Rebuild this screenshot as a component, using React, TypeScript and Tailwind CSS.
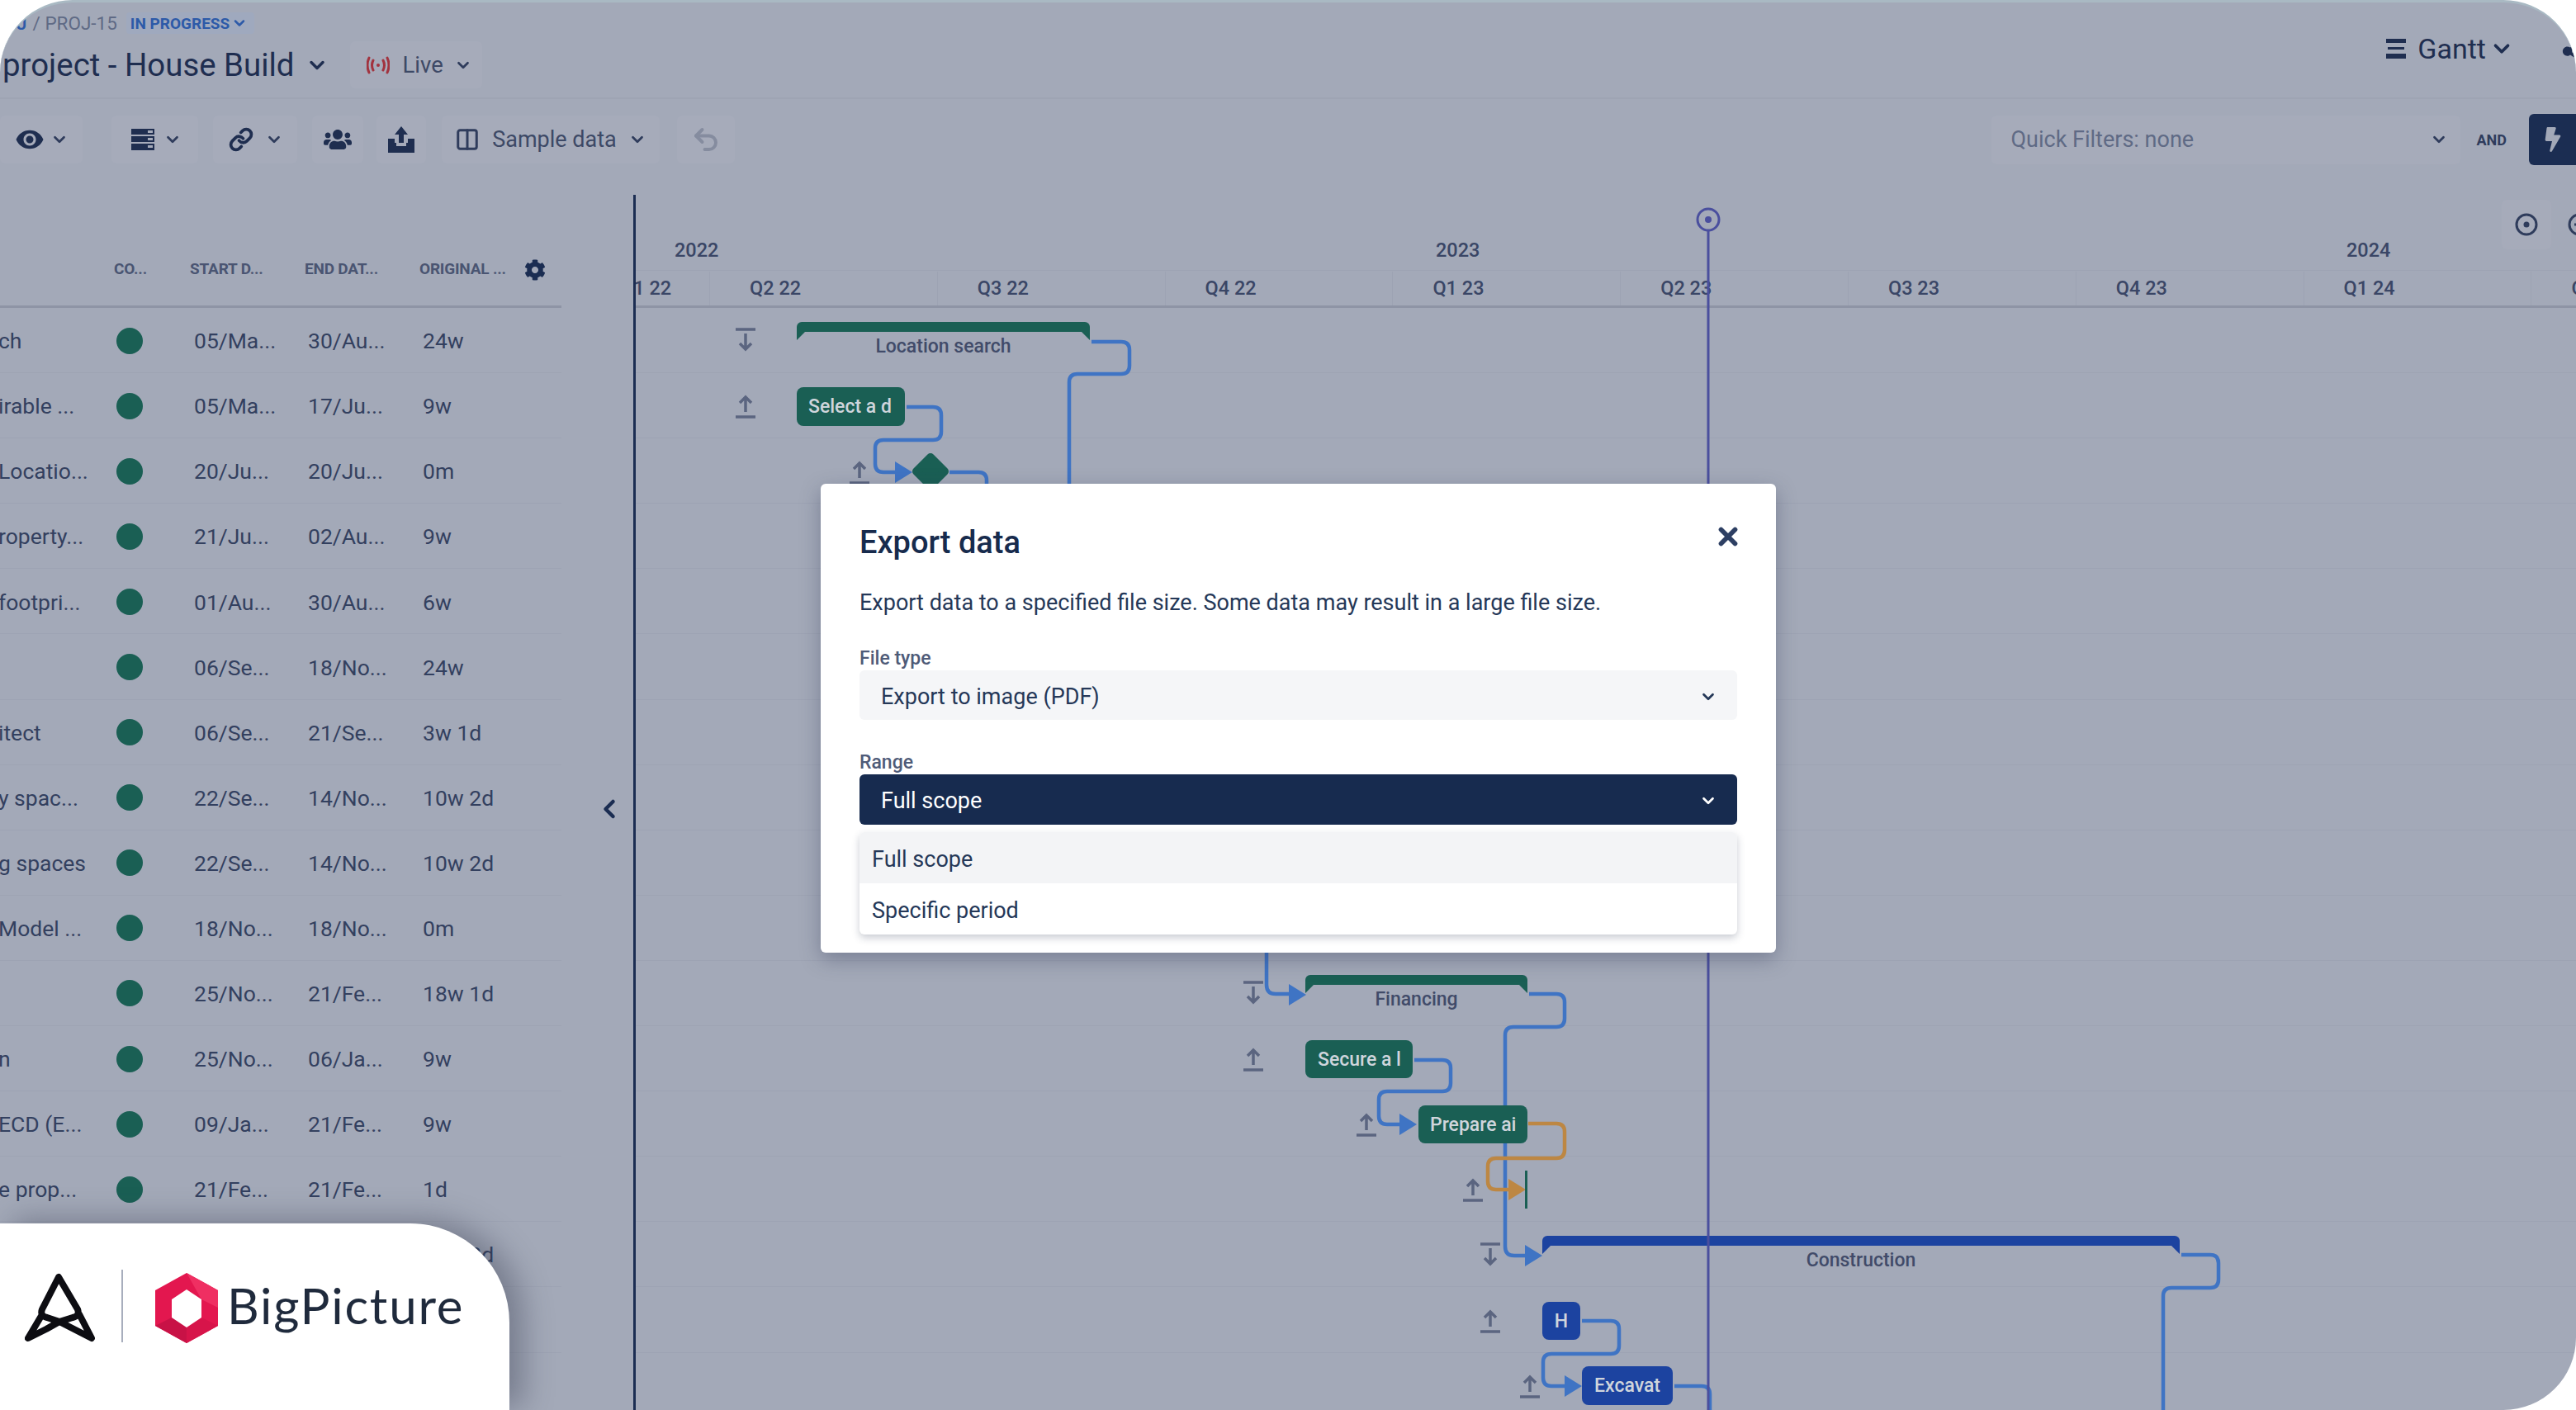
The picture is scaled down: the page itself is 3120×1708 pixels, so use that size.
import React from "react";
import { ChevronDown, ChevronLeft, Columns2, Link as LinkIcon, Undo2, X } from "lucide-react";
import { FaBolt, FaCog, FaShareAlt, FaUsers } from "react-icons/fa";
import { MdVisibility } from "react-icons/md";

const rows = [
  ["ch", "05/Ma...", "30/Au...", "24w"],
  ["irable ...", "05/Ma...", "17/Ju...", "9w"],
  ["Locatio...", "20/Ju...", "20/Ju...", "0m"],
  ["roperty...", "21/Ju...", "02/Au...", "9w"],
  ["footpri...", "01/Au...", "30/Au...", "6w"],
  ["", "06/Se...", "18/No...", "24w"],
  ["itect", "06/Se...", "21/Se...", "3w 1d"],
  ["y spac...", "22/Se...", "14/No...", "10w 2d"],
  ["g spaces", "22/Se...", "14/No...", "10w 2d"],
  ["Model ...", "18/No...", "18/No...", "0m"],
  ["", "25/No...", "21/Fe...", "18w 1d"],
  ["n", "25/No...", "06/Ja...", "9w"],
  ["ECD (E...", "09/Ja...", "21/Fe...", "9w"],
  ["e prop...", "21/Fe...", "21/Fe...", "1d"],
  ["", "", "", "10w 2d"],
  ["", "", "", ""],
];

const quarters = ["Q2 22", "Q3 22", "Q4 22", "Q1 23", "Q2 23", "Q3 23", "Q4 23", "Q1 24", "Q2 24"];

function Chev({ className }: { className: string }) {
  return <ChevronDown className={className} strokeWidth={3} />;
}

function Up({ x, y }: { x: number; y: number }) {
  return (
    <g stroke="#5b6580" strokeWidth={3.5} fill="none">
      <path d={`M${x} ${y + 7}V${y - 11}M${x - 7} ${y - 4}L${x} ${y - 11}L${x + 7} ${y - 4}`} />
      <path d={`M${x - 12} ${y + 13}H${x + 12}`} />
    </g>
  );
}

function Collapse({ x, y }: { x: number; y: number }) {
  return (
    <g stroke="#5b6580" strokeWidth={3.5} fill="none">
      <path d={`M${x} ${y - 8}V${y + 11}M${x - 7} ${y + 4}L${x} ${y + 11}L${x + 7} ${y + 4}`} />
      <path d={`M${x - 12} ${y - 13}H${x + 12}`} />
    </g>
  );
}

function Arrow({ x, y, color }: { x: number; y: number; color: string }) {
  return <path d={`M${x - 21} ${y - 13}L${x} ${y}L${x - 21} ${y + 13}Z`} fill={color} />;
}

function TopIconBox({ className, children }: { className: string; children: React.ReactNode }) {
  return <div className={`flex h-[58px] items-center justify-center rounded-md bg-[#a6abba] ${className}`}>{children}</div>;
}

function Bracket({ className, color, label }: { className: string; color: string; label: string }) {
  return (
    <div className={`absolute ${className}`}>
      <div className={`h-[22px] rounded-t-[6px] [clip-path:polygon(0_0,100%_0,100%_100%,calc(100%_-_10px)_12px,10px_12px,0_100%)] ${color}`} />
      <div className="-mt-[4px] text-center text-[23px] font-medium leading-[24px] text-[#414b69]">{label}</div>
    </div>
  );
}

function Task({ className, color, label }: { className: string; color: string; label: string }) {
  return (
    <div className={`absolute flex items-center overflow-hidden whitespace-nowrap rounded-lg text-[23px] font-medium leading-none text-[#cfd5dc] ${color} ${className}`}>
      {label}
    </div>
  );
}

function Logo() {
  return (
    <div className="absolute bottom-0 left-0 z-20 flex h-[226px] w-[617px] items-start rounded-tr-[120px] bg-white pl-[30px] pt-[56px] shadow-[16px_-4px_36px_rgba(50,55,75,0.4)]">
      <svg width="85" height="84" viewBox="0 0 85 84" className="mt-[4px] shrink-0">
        <path
          d="M41 5L21 44Q18 52 27 54L42 59L58 54Q67 52 64 44ZM20 52L4 79L26 68L42 59L81 79L66 50"
          fill="none"
          stroke="#0d0d12"
          strokeWidth="8"
          strokeLinejoin="round"
          strokeLinecap="round"
        />
      </svg>
      <div className="ml-[32px] h-[88px] w-[2px] shrink-0 bg-[#a8aebd]" />
      <svg width="76" height="85" viewBox="0 0 76 85" className="ml-[39px] mt-[4px] shrink-0">
        <polygon points="38,0 76,21 76,64 38,85 0,64 0,21" fill="#e3174f" />
        <polygon points="38,0 76,21 76,42 56,32" fill="#ef2f62" />
        <polygon points="0,64 38,85 38,66 20,54" fill="#c81246" />
        <polygon points="76,64 38,85 38,66 56,54" fill="#d7144a" />
        <polygon points="38,20 56,32 56,54 38,66 20,54 20,32" fill="#ffffff" />
      </svg>
      <span className="ml-[11px] mt-[8px] font-['Lato',sans-serif] text-[60px] leading-[70px] tracking-[1.8px] text-[#1f2a3c]">BigPicture</span>
    </div>
  );
}

function Modal() {
  return (
    <div className="absolute left-[994px] top-[586px] z-10 h-[568px] w-[1157px] rounded-md bg-white px-[47px] pt-[48px] shadow-[0_8px_24px_rgba(40,50,80,0.35)]">
      <X className="absolute right-[41px] top-[47px] h-[34px] w-[34px] text-[#2d3f63]" strokeWidth={4} />
      <h2 className="text-[38px] font-medium leading-[46px] text-[#172b4d]">Export data</h2>
      <p className="mt-[33px] text-[27px] leading-[34px] text-[#253858]">Export data to a specified file size. Some data may result in a large file size.</p>
      <div className="mt-[39px] text-[23px] font-medium leading-[24px] text-[#4f5b78]">File type</div>
      <div className="mt-[2px] flex h-[60px] items-center justify-between rounded-md bg-[#f5f6f8] pl-[26px] pr-[24px] pt-[4px] text-[27px] text-[#253858]">
        <span>Export to image (PDF)</span>
        <Chev className="h-[22px] w-[22px] text-[#253858]" />
      </div>
      <div className="mt-[40px] text-[23px] font-medium leading-[24px] text-[#4f5b78]">Range</div>
      <div className="mt-[2px] flex h-[61px] items-center justify-between rounded-md bg-[#172b4f] pl-[26px] pr-[24px] pt-[3px] text-[27px] text-white">
        <span>Full scope</span>
        <Chev className="h-[22px] w-[22px] text-white" />
      </div>
      <div className="mt-[9px] overflow-hidden rounded-md bg-white text-[27px] text-[#253858] shadow-[0_4px_10px_rgba(40,50,80,0.25)]">
        <div className="flex h-[62px] items-center bg-[#f3f4f6] pl-[15px] pt-[4px]">Full scope</div>
        <div className="flex h-[62px] items-center pl-[15px] pt-[4px]">Specific period</div>
      </div>
    </div>
  );
}

export default function App() {
  return (
    <div className="relative h-[1708px] w-[3120px] overflow-hidden bg-white font-['Roboto',sans-serif] text-[#33405f]">
      <div className="flex h-full flex-col overflow-hidden rounded-[88px] border-t-[3px] border-[#a9b9c3] bg-[#a3a9b8]">
        {/* header */}
        <header className="-mt-[3px] flex h-[120px] shrink-0 justify-between border-b-2 border-[#9ea4b3]">
          <div>
            <div className="flex h-[56px] items-center pl-[20px] text-[22.5px] leading-none">
              <span className="font-medium text-[#2d5aa8]">J</span>
              <span className="ml-[7px] text-[#5f6a85]">/ PROJ-15</span>
              <span className="ml-[11px] flex h-[26px] w-[155px] items-center gap-[2px] rounded-sm bg-[#9fa9be] pl-[5px] text-[19px] font-bold text-[#2d5aa8]">
                IN PROGRESS
                <Chev className="h-[20px] w-[20px]" />
              </span>
            </div>
            <div className="-mt-[6px] flex items-center pl-[3px]">
              <span className="text-[38.4px] leading-[48px] text-[#1f2e50]">project - House Build</span>
              <Chev className="ml-[14px] h-[28px] w-[28px] text-[#1f2e50]" />
              <div className="ml-[26px] flex h-[57px] w-[160px] items-center rounded-md bg-[#a6abba] pl-[20px] text-[27.5px] text-[#3d4966]">
                <svg width="28" height="24" viewBox="0 0 28 24" fill="none" stroke="#a2333f" strokeWidth="3" strokeLinecap="round">
                  <circle cx="14" cy="12" r="2" fill="#a2333f" stroke="none" />
                  <path d="M8 6Q5 12 8 18M20 6Q23 12 20 18M3 3Q-1 12 3 21M25 3Q29 12 25 21" />
                </svg>
                <span className="ml-[15px]">Live</span>
                <Chev className="ml-[13px] h-[22px] w-[22px] text-[#2f3c5c]" />
              </div>
            </div>
          </div>
          <div className="-mr-[12px] flex items-start pt-[44px] text-[#1f2e50]">
            <svg width="26" height="28" viewBox="0 0 26 28" className="mt-[1px]" fill="#1f2e50">
              <rect x="1" y="2" width="24" height="5" />
              <rect x="3" y="12" width="20" height="3" />
              <rect x="1" y="20" width="24" height="6" />
            </svg>
            <span className="ml-[13px] text-[34px] leading-[30px]">Gantt</span>
            <Chev className="ml-[4px] h-[30px] w-[30px]" />
            <FaShareAlt className="ml-[57px] mt-[3px] h-[30px] w-[30px] shrink-0" />
          </div>
        </header>

        {/* toolbar */}
        <div className="flex h-[116px] shrink-0 items-center pb-[18px]">
          <TopIconBox className="w-[100px] gap-[7px]">
            <MdVisibility className="h-[36px] w-[36px] text-[#1f2e50]" />
            <Chev className="h-[22px] w-[22px] text-[#2f3c5c]" />
          </TopIconBox>
          <TopIconBox className="ml-[35px] w-[105px] gap-[11px] pl-[4px]">
            <svg width="28" height="26" viewBox="0 0 28 26" fill="#1f2e50">
              <rect width="28" height="7" />
              <rect y="9" width="28" height="7" />
              <rect y="18" width="28" height="8" />
              <rect x="20" y="2" width="6" height="3" fill="#a6abba" />
              <rect x="20" y="11" width="6" height="3" fill="#a6abba" />
              <rect x="20" y="20" width="6" height="3" fill="#a6abba" />
            </svg>
            <Chev className="h-[22px] w-[22px] text-[#2f3c5c]" />
          </TopIconBox>
          <TopIconBox className="ml-[18px] w-[102px] gap-[14px] pl-[2px]">
            <LinkIcon className="h-[30px] w-[30px] text-[#1f2e50]" strokeWidth={3} />
            <Chev className="h-[22px] w-[22px] text-[#2f3c5c]" />
          </TopIconBox>
          <TopIconBox className="ml-[18px] w-[62px]">
            <FaUsers className="h-[34px] w-[34px] text-[#1f2e50]" />
          </TopIconBox>
          <TopIconBox className="ml-[16px] w-[60px]">
            <svg width="32" height="32" viewBox="0 0 32 32" fill="#1f2e50">
              <path d="M16 0L24 10H19V20H13V10H8Z" />
              <path d="M0 15H8V20H10V24H22V20H24V15H32V32H0Z" />
            </svg>
          </TopIconBox>
          <TopIconBox className="ml-[19px] w-[264px] text-[27px] text-[#3d4966]">
            <Columns2 className="h-[30px] w-[30px] text-[#2f3c5c]" strokeWidth={2.4} />
            <span className="ml-[15px]">Sample data</span>
            <Chev className="ml-[14px] h-[22px] w-[22px] text-[#2f3c5c]" />
          </TopIconBox>
          <TopIconBox className="ml-[21px] w-[70px]">
            <Undo2 className="h-[36px] w-[36px] text-[#858c9f]" strokeWidth={2.6} />
          </TopIconBox>
          <div className="ml-auto flex items-center">
            <div className="flex h-[59px] w-[568px] items-center justify-between rounded-md bg-[#a6abba] pl-[24px] pr-[15px] text-[27px] text-[#5f6a85]">
              <span>Quick Filters: none</span>
              <Chev className="h-[22px] w-[22px] text-[#2f3c5c]" />
            </div>
            <span className="ml-[20px] text-[18px] font-bold text-[#2f3c5c]">AND</span>
            <div className="ml-[27px] flex h-[62px] w-[57px] items-center justify-start rounded-l-md bg-[#1b2d52] pl-[17px]">
              <FaBolt className="h-[30px] w-[24px] text-[#a3a9b8]" />
            </div>
          </div>
        </div>

        {/* body */}
        <div className="relative flex min-h-0 flex-1">
          {/* table */}
          <div className="relative w-[770px] shrink-0 border-r-[3px] border-[#1b2d52]">
            <div className="w-[680px]">
              <div className="grid h-[137px] grid-cols-[138px_92px_139px_139px_127px_1fr] items-end border-b-[3px] border-[#8e94a5] pb-[33px] text-[19px] font-bold leading-[22px] tracking-[-0.2px] text-[#4a5572]">
                <span />
                <span className="-ml-[138px] pl-[138px]">CO...</span>
                <span>START D...</span>
                <span>END DAT...</span>
                <span>ORIGINAL ...</span>
                <FaCog className="mb-[-3px] h-[26px] w-[26px] text-[#1b2d52]" />
              </div>
              {rows.map((r, i) => (
                <div key={i} className="grid h-[79.1px] grid-cols-[141px_94px_138px_139px_1fr] items-center border-b border-[#9da3b3] pt-[2px] text-[26.5px] text-[#33405f]">
                  <span className="-ml-[2px] overflow-hidden whitespace-nowrap">{r[0]}</span>
                  <span>{i < 14 && <span className="-mt-[1px] block h-[32px] w-[32px] rounded-full bg-[#1a5f54]" />}</span>
                  <span className="whitespace-nowrap">{r[1]}</span>
                  <span className="whitespace-nowrap">{r[2]}</span>
                  <span className="whitespace-nowrap">{r[3]}</span>
                </div>
              ))}
            </div>
            <ChevronLeft className="absolute left-[720px] top-[726px] h-[36px] w-[36px] text-[#1b2d52]" strokeWidth={3} />
          </div>

          {/* timeline */}
          <div className="relative flex min-w-0 flex-1 flex-col">
            <div className="h-[137px] shrink-0 border-b-[3px] border-[#8e94a5] text-[23.5px] font-medium leading-none text-[#3a4666]">
              <div className="flex h-[92px] items-end border-b border-[#9da3b3] pb-[12px]">
                <span className="ml-[47px] w-[922px]">2022</span>
                <span className="w-[1103px]">2023</span>
                <span>2024</span>
              </div>
              <div className="flex h-[42px] overflow-hidden pt-[1px]">
                <div className="flex w-[90px] shrink-0 items-center overflow-hidden border-r border-[#9da3b3]">
                  <span className="-ml-[19px] whitespace-nowrap">Q1 22</span>
                </div>
                {quarters.map((q) => (
                  <div key={q} className="flex w-[275.8px] shrink-0 items-center border-r border-[#9da3b3] pl-[48px]">
                    {q}
                  </div>
                ))}
              </div>
            </div>

            <div className="relative min-h-0 flex-1 overflow-hidden">
              {rows.concat(rows).slice(0, 17).map((_, i) => (
                <div key={i} className="h-[79.1px] border-b border-[#9da3b3]" />
              ))}
              <svg className="absolute inset-0 h-full w-full" viewBox="770 373 2350 1335" fill="none">
                <g stroke="#3f74c4" strokeWidth={4.5} strokeLinejoin="round">
                  <path d="M1322 414H1358Q1368 414 1368 424V443Q1368 453 1358 453H1305Q1295 453 1295 463V600" />
                  <path d="M1098 493H1130Q1140 493 1140 503V523Q1140 533 1130 533H1070Q1060 533 1060 543V562Q1060 572 1070 572H1090" />
                  <path d="M1150 572H1185Q1195 572 1195 582V600" />
                  <path d="M1534 1130V1193Q1534 1204 1545 1204H1565" />
                  <path d="M1852 1204H1885Q1895 1204 1895 1214V1234Q1895 1244 1885 1244H1833Q1823 1244 1823 1254V1510Q1823 1521 1834 1521H1850" />
                  <path d="M1713 1284H1747Q1757 1284 1757 1294V1312Q1757 1322 1747 1322H1680Q1670 1322 1670 1332V1352Q1670 1362 1680 1362H1700" />
                  <path d="M2642 1520H2677Q2687 1520 2687 1530V1550Q2687 1560 2677 1560H2630Q2620 1560 2620 1570V1720" />
                  <path d="M1916 1600H1951Q1961 1600 1961 1610V1630Q1961 1640 1951 1640H1879Q1869 1640 1869 1650V1669Q1869 1679 1879 1679H1900" />
                  <path d="M2028 1679H2061Q2071 1679 2071 1689V1720" />
                </g>
                <path d="M1851 1361H1885Q1895 1361 1895 1371V1393Q1895 1403 1885 1403H1812Q1802 1403 1802 1413V1431Q1802 1441 1812 1441H1830" stroke="#bd8743" strokeWidth={4.5} />
                <Arrow x={1105} y={572} color="#3f74c4" />
                <Arrow x={1582} y={1205} color="#3f74c4" />
                <Arrow x={1716} y={1362} color="#3f74c4" />
                <Arrow x={1848} y={1441} color="#bd8743" />
                <Arrow x={1868} y={1521} color="#3f74c4" />
                <Arrow x={1916} y={1679} color="#3f74c4" />
                <path d="M1127 554L1144 571L1127 588L1110 571Z" fill="#1a5f54" stroke="#1a5f54" strokeWidth={10} strokeLinejoin="round" />
                <rect x="1847" y="1418" width="3" height="46" fill="#1a5f54" />
                <Collapse x={903} y={412} />
                <Up x={903} y={492} />
                <Up x={1041} y={572} />
                <Collapse x={1518} y={1203} />
                <Up x={1518} y={1283} />
                <Up x={1655} y={1362} />
                <Up x={1784} y={1441} />
                <Collapse x={1805} y={1520} />
                <Up x={1805} y={1600} />
                <Up x={1853} y={1679} />
              </svg>
              <Bracket className="left-[195px] top-[17px] w-[355px]" color="bg-[#1a5f54]" label="Location search" />
              <Bracket className="left-[811px] top-[808px] w-[269px]" color="bg-[#1a5f54]" label="Financing" />
              <Bracket className="left-[1098px] top-[1124px] w-[772px]" color="bg-[#1c43a0]" label="Construction" />
              <Task className="left-[195px] top-[96px] h-[47px] w-[131px] pl-[14px]" color="bg-[#1a5f54]" label="Select a d" />
              <Task className="left-[811px] top-[887px] h-[46px] w-[130px] pl-[15px]" color="bg-[#1a5f54]" label="Secure a l" />
              <Task className="left-[948px] top-[966px] h-[46px] w-[132px] pl-[14px]" color="bg-[#1a5f54]" label="Prepare ai" />
              <Task className="left-[1098px] top-[1204px] h-[46px] w-[46px] justify-center" color="bg-[#1c43a0]" label="H" />
              <Task className="left-[1146px] top-[1282px] h-[47px] w-[110px] justify-center" color="bg-[#1c43a0]" label="Excavat" />
            </div>

            <svg className="pointer-events-none absolute inset-0 h-full w-full" viewBox="770 236 2350 1472" fill="none">
              <circle cx="2069" cy="266" r="13" stroke="#4a4f9e" strokeWidth="3" />
              <circle cx="2069" cy="266" r="4" fill="#4a4f9e" />
              <rect x="2067.5" y="279" width="3" height="1429" fill="#4a4f9e" />
            </svg>

            <div className="absolute left-[2260px] top-[6px] flex h-[60px] w-[60px] items-center justify-center rounded-md bg-[#a6abba]">
              <svg width="28" height="28" viewBox="0 0 28 28" fill="none" stroke="#2f3c5c" strokeWidth="3">
                <circle cx="14" cy="14" r="12" />
                <circle cx="14" cy="14" r="3.5" fill="#2f3c5c" stroke="none" />
              </svg>
            </div>
            <svg width="28" height="28" viewBox="0 0 28 28" fill="none" stroke="#2f3c5c" strokeWidth="3" className="absolute left-[2340px] top-[22px]">
              <circle cx="14" cy="14" r="12" />
              <path d="M8 14H20" />
            </svg>
          </div>
        </div>
      </div>
      <Modal />
      <Logo />
    </div>
  );
}
